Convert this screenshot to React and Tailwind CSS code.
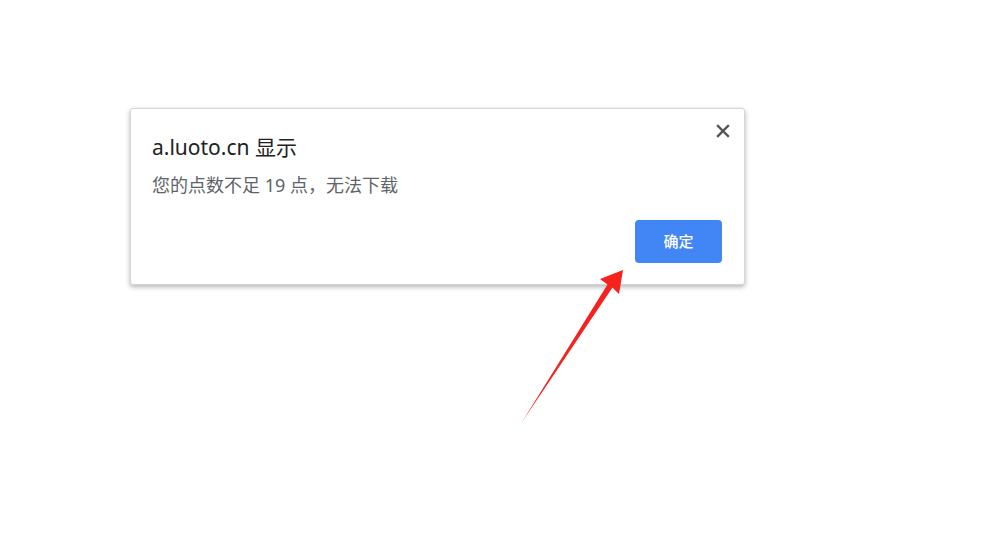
export default function App() {
    return (
        <div className="relative w-[1000px] h-[556px] bg-white overflow-hidden" style={{ fontFamily: '"Noto Sans", "Noto Sans CJK SC", sans-serif' }}>
            <div className="pt-[108px] pl-[130px]">
                <div className="relative w-[615px] h-[177px] bg-white rounded-[3px] border border-[#d6d6d6] shadow-[0_2px_5px_rgba(0,0,0,0.3)] pt-[25px] pl-[21px] pr-[22px] flex flex-col">
                    <div className="text-[21px] leading-[26px] text-[#222]">a.luoto.cn 显示</div>
                    <div className="mt-[14px] text-[18px] leading-[22px] text-[#606368]">您的点数不足 19 点，无法下载</div>
                    <div className="mt-[24px] flex justify-end">
                        <button className="w-[87px] h-[43px] rounded-[4px] bg-[#4285f4] text-white text-[15px] font-medium">确定</button>
                    </div>
                    <button className="absolute top-[15px] right-[14px] w-[14px] h-[14px] text-[#555]">
                        <svg viewBox="0 0 14 14" className="w-[14px] h-[14px]" stroke="currentColor" strokeWidth="2.4" strokeLinecap="square">
                            <path d="M2 2L12 12M12 2L2 12" />
                        </svg>
                    </button>
                </div>
            </div>
            <svg className="absolute inset-0 pointer-events-none" width="1000" height="556" viewBox="0 0 1000 556">
                <polygon points="522,422 607.5,284.5 600,279 623,270 619,294 612.5,287.5" fill="#f5221d" />
            </svg>
        </div>
    );
}
